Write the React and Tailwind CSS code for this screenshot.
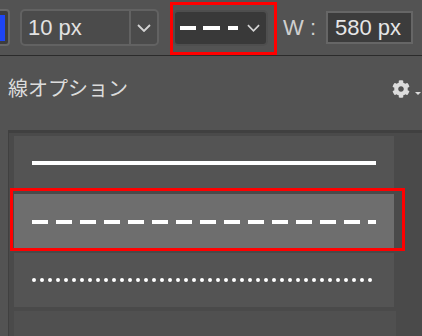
import { FaCog } from "react-icons/fa";

const Chevron = ({ className }) => (
  <svg viewBox="0 0 14 8" className={className} fill="none">
    <path d="M1 1l6 6 6-6" stroke="#d4d4d4" strokeWidth="1.8" />
  </svg>
);

const LineRow = ({ kind, selected }) => (
  <div
    className={`relative h-[56px] w-[380px] flex items-center ${
      selected ? "bg-[#6e6e6e]" : "bg-[#545454]"
    }`}
  >
    <svg width="380" height="4" className="block">
      {kind === "solid" && <line x1="18" y1="2" x2="362" y2="2" stroke="#fff" strokeWidth="4" />}
      {kind === "dashed" && (
        <line x1="18" y1="2" x2="362" y2="2" stroke="#fff" strokeWidth="4" strokeDasharray="16 8" />
      )}
      {kind === "dotted" && (
        <line
          x1="20"
          y1="2"
          x2="360"
          y2="2"
          stroke="#fff"
          strokeWidth="4"
          strokeLinecap="round"
          strokeDasharray="0 8"
        />
      )}
    </svg>
    {selected && (
      <div className="absolute left-[-4px] top-[-6px] w-[395px] h-[63px] border-[3px] border-[#ff0000]" />
    )}
  </div>
);

export default function App() {
  return (
    <div
      className="w-[422px] h-[336px] overflow-hidden bg-[#535353] text-[#d6d6d6]"
      style={{ fontFamily: '"Liberation Sans", "Noto Sans CJK JP", sans-serif' }}
    >
      {/* Options bar */}
      <div className="h-[56px] border-b border-[#2b2b2b] flex items-center">
        <div className="w-[10px] h-[37px] rounded-r-[4px] border-2 border-l-0 border-[#686868] bg-[#3d3d3d] flex items-center">
          <div className="w-[5px] h-[26px] bg-[#1e45f6]" />
        </div>

        <div className="ml-[10px] w-[139px] h-[37px] rounded-[5px] border-2 border-[#626262] bg-[#4b4b4b] flex">
          <div className="flex-1 flex items-center pl-[6px] text-[22px] text-[#e2e2e2]">10 px</div>
          <div className="w-[28px] border-l-2 border-[#626262] flex items-center justify-center">
            <Chevron className="w-[14px] h-[8px]" />
          </div>
        </div>

        <div className="relative ml-[14px] w-[95px] h-[36px] rounded-[5px] border-2 border-[#4e4e4e] bg-[#393939] flex items-center">
          <div className="ml-[5px] w-[16px] h-[4px] bg-white" />
          <div className="ml-[7px] w-[17px] h-[4px] bg-white" />
          <div className="ml-[8px] w-[10px] h-[4px] bg-white" />
          <Chevron className="ml-[9px] w-[13px] h-[8px]" />
          <div className="absolute left-[-5px] top-[-10px] w-[107px] h-[53px] border-[3px] border-[#ff0000]" />
        </div>

        <div className="ml-[15px] text-[22px] text-[#cfcfcf] whitespace-pre">W :</div>
        <div className="ml-[10px] w-[87px] h-[33px] border-2 border-[#666] bg-[#3c3c3c] flex items-center pl-[7px] text-[22px] text-[#e6e6e6]">
          580 px
        </div>
      </div>

      {/* Panel header */}
      <div className="h-[74px] flex items-center pl-[8px] pr-[1px] pb-[8px]">
        <span className="text-[20px] text-[#dcdcdc]">線オプション</span>
        <div className="ml-auto flex items-end">
          <FaCog className="w-[18px] h-[18px] text-[#dcdcdc]" />
          <div className="ml-[5px] mb-[3px] w-0 h-0 border-x-[3px] border-x-transparent border-t-[3px] border-t-[#dcdcdc]" />
        </div>
      </div>

      {/* Line style list */}
      <div className="ml-[8px] border-l border-t-[3px] border-[#404040] bg-[#4a4a4a] pt-[3px] pl-[5px] flex flex-col gap-[4px] h-[220px]">
        <LineRow kind="solid" />
        <LineRow kind="dashed" selected />
        <LineRow kind="dotted" />
        <div className="h-[40px] w-[382px] bg-[#505050]" />
      </div>
    </div>
  );
}
